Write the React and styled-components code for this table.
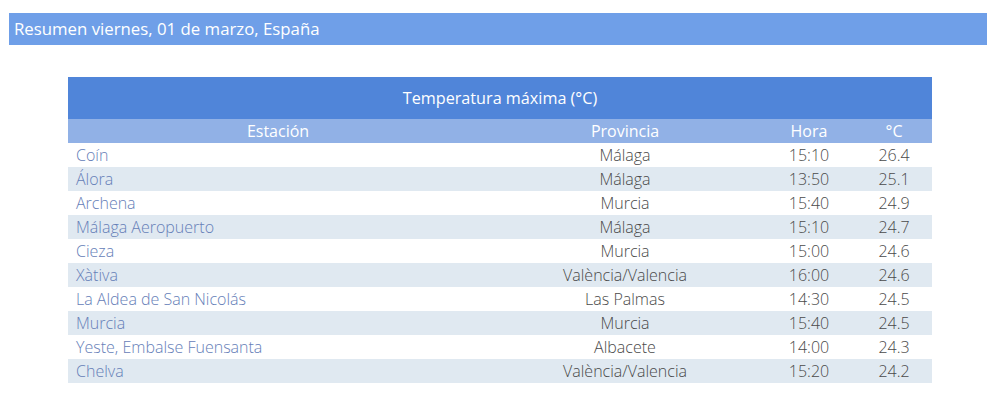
import React from "react";
import styled, { createGlobalStyle } from "styled-components";

const Global = createGlobalStyle`
  html, body { margin: 0; padding: 0; background: #fff; }
  body { font-family: "Open Sans", "Liberation Sans", sans-serif; }
`;

const Page = styled.div`
  padding: 13px 0 0 9px;
`;

const TopBar = styled.div`
  height: 32px;
  background: #6f9fe8;
  color: #fff;
  font-size: 16.8px;
  line-height: 32px;
  padding-left: 5px;
  font-weight: 400;
`;

const Wrap = styled.div`
  margin: 32px 0 0 59px;
  width: 864px;
`;

const Table = styled.table`
  width: 100%;
  border-collapse: collapse;
  table-layout: fixed;
  font-size: 16px;
`;

const Caption = styled.th`
  background: #5085d9;
  color: #fff;
  height: 42px;
  font-weight: 400;
  font-size: 16.2px;
  padding: 0;
  text-align: center;
`;

const Head = styled.th`
  background: #91b1e6;
  color: #fff;
  height: 24px;
  font-weight: 400;
  padding: 0;
  text-align: center;
`;

const Row = styled.tr`
  background: ${(p) => (p.$alt ? "#e0e9f1" : "#fff")};
`;

const Cell = styled.td`
  height: 24px;
  padding: 0 ${(p) => (p.$left ? "8px" : "0")};
  text-align: ${(p) => (p.$left ? "left" : "center")};
  color: ${(p) => (p.$link ? "#6680b8" : "#4a4a4a")};
  font-weight: 300;
  white-space: nowrap;
  line-height: 24px;
`;

const data = [
  ["Coín", "Málaga", "15:10", "26.4"],
  ["Álora", "Málaga", "13:50", "25.1"],
  ["Archena", "Murcia", "15:40", "24.9"],
  ["Málaga Aeropuerto", "Málaga", "15:10", "24.7"],
  ["Cieza", "Murcia", "15:00", "24.6"],
  ["Xàtiva", "València/Valencia", "16:00", "24.6"],
  ["La Aldea de San Nicolás", "Las Palmas", "14:30", "24.5"],
  ["Murcia", "Murcia", "15:40", "24.5"],
  ["Yeste, Embalse Fuensanta", "Albacete", "14:00", "24.3"],
  ["Chelva", "València/Valencia", "15:20", "24.2"],
];

export default function App() {
  return (
    <Page>
      <Global />
      <TopBar>Resumen viernes, 01 de marzo, España</TopBar>
      <Wrap>
        <Table>
          <colgroup>
            <col style={{ width: 420 }} />
            <col style={{ width: 274 }} />
            <col style={{ width: 94 }} />
            <col style={{ width: 76 }} />
          </colgroup>
          <thead>
            <tr>
              <Caption colSpan={4}>Temperatura máxima (°C)</Caption>
            </tr>
            <tr>
              <Head>Estación</Head>
              <Head>Provincia</Head>
              <Head>Hora</Head>
              <Head>°C</Head>
            </tr>
          </thead>
          <tbody>
            {data.map((r, i) => (
              <Row key={i} $alt={i % 2 === 1}>
                <Cell $left $link>{r[0]}</Cell>
                <Cell>{r[1]}</Cell>
                <Cell>{r[2]}</Cell>
                <Cell>{r[3]}</Cell>
              </Row>
            ))}
          </tbody>
        </Table>
      </Wrap>
    </Page>
  );
}
